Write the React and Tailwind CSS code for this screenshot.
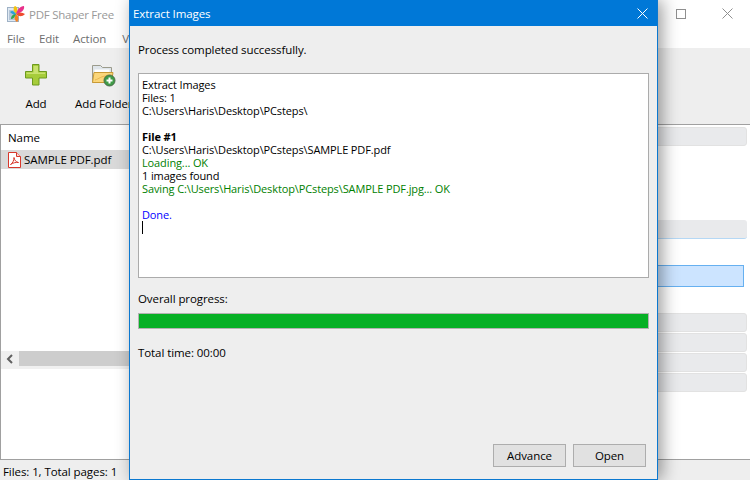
import React from "react";

const font = "font-['Open_Sans','Noto_Sans',sans-serif]";
const uiText = "text-[11.5px] tracking-[-0.08px]";

const PanelRow = ({ className = "" }) => (
  <div className={`h-[19px] w-full rounded-[3px] bg-[#e9eaec] border border-[#e2e2e2] ${className}`} />
);

const Logo = () => (
  <svg width="18" height="18" viewBox="0 0 18 18">
    <rect x="0.500" y="2.500" width="11" height="14" fill="#dfe9f3" stroke="#9fb2c6" />
    <path d="M2 6h8M2 8h8M2 10h7M2 12h7M2 14h7" stroke="#8aa0b8" />
    <path d="M9 9C6 6 6 2 8 1c3 1 3 5 1 8z" fill="#f4c20d" />
    <path d="M9 9c1-4 4-8 8-8 1 4-3 7-8 8z" fill="#e8308a" />
    <path d="M9 9c3-2 6-2 9 0-3 3-6 3-9 0z" fill="#ef4b2f" />
    <path d="M9 9c3 2 3 6 1 8-3-2-3-5-1-8z" fill="#f58220" />
    <path d="M9 9c-1 3-3 5-5 5 0-3 2-5 5-5z" fill="#2fa84f" />
    <path d="M9 9C7 10 5 9 3 7c2-2 4-1 6 2z" fill="#2b9fd9" />
  </svg>
);

const PlusIcon = () => (
  <svg width="24" height="24" viewBox="0 0 24 24">
    <path
      d="M8.500 1.500h6.500v7h7.500v6.500H15v7H8.500v-7H1.500V8.500h7z"
      fill="#a6cc3a"
      stroke="#6d9a1e"
      strokeLinejoin="round"
    />
    <path d="M9.500 3h4.500v6.500H21v1.500H2.500V9.500h7z" fill="#c9e26f" />
  </svg>
);

const FolderIcon = () => (
  <svg width="25" height="24" viewBox="0 0 25 24">
    <path d="M1.500 2.500h8l2 2h9v15h-19z" fill="#dfe5ea" stroke="#9b9b8c" />
    <path d="M3.500 6.500h15v3h-15z" fill="#fff" />
    <path d="M1.500 19.500l1.500-10h19l-1.500 10z" fill="#fbd67a" stroke="#c99a35" />
    <path d="M4 17c4-1 6-4 12-4" fill="none" stroke="#e8b64f" />
    <circle cx="18.500" cy="17.500" r="5.500" fill="#3f9b47" stroke="#4a6b4a" />
    <path d="M18.500 14.500v6M15.500 17.500h6" stroke="#fff" strokeWidth="2" />
  </svg>
);

const PdfIcon = () => (
  <svg width="13" height="16" viewBox="0 0 13 16">
    <path d="M.5.500h8l4 4v11H.5z" fill="#fff" stroke="#d8372b" />
    <path d="M8.500.500v4h4" fill="#f7d5d2" stroke="#d8372b" />
    <path
      d="M2.500 12.500c2-1 3.500-4 3.500-7 .5 3 2 4.500 4.500 5-2.500-.5-6 .5-8 2z"
      fill="none"
      stroke="#d8372b"
    />
  </svg>
);

const ToolButton = ({ icon, label }) => (
  <div className="flex flex-col items-center shrink-0">
    <div className="h-[24px] flex items-center">{icon}</div>
    <span className={`mt-[9px] ${uiText} leading-[16px] text-black whitespace-nowrap`}>{label}</span>
  </div>
);

const MainWindow = () => (
  <div className="w-[750px] h-[480px] flex flex-col bg-white">
    <div className="h-[27px] flex items-center shrink-0 pl-[7px]">
      <Logo />
      <span className="ml-[4px] mt-[2px] text-[11.5px] tracking-[-0.25px] text-[#999999]">PDF Shaper Free</span>
      <div className="ml-auto flex items-center gap-[36px] pr-[17px]">
        <div className="w-[10px] h-[10px] border border-[#8f8f8f]" />
        <svg width="11" height="11" viewBox="0 0 11 11">
          <path d="M.5.500l10 10M10.500.500l-10 10" stroke="#8f8f8f" />
        </svg>
      </div>
    </div>
    <div className={`h-[21px] pt-[3px] flex items-center gap-[14px] pl-[7px] ${uiText} text-[#6e6e6e] shrink-0`}>
      <span>File</span>
      <span>Edit</span>
      <span>Action</span>
      <span className="ml-[2px]">View</span>
    </div>
    <div className="h-[76px] bg-[#eeeeee] flex pt-[15px] pl-[24px] gap-[27px] shrink-0">
      <ToolButton icon={<PlusIcon />} label="Add" />
      <ToolButton icon={<FolderIcon />} label="Add Folder" />
    </div>
    <div className="flex-1 flex border-t border-[#a0a0a0] border-b min-h-0">
      <div className="w-[400px] border-l border-[#a0a0a0] flex flex-col shrink-0">
        <div className={`h-[25px] flex items-center pl-[7px] ${uiText} text-black`}>Name</div>
        <div className={`h-[19px] bg-[#d9d9d9] flex items-center pl-[7px] gap-[3px] ${uiText} text-black`}>
          <PdfIcon />
          <span>SAMPLE PDF.pdf</span>
        </div>
        <div className="mt-[182px] h-[18px] bg-[#f0f0f0] flex items-start">
          <div className="w-[18px] h-[15px] flex items-center justify-center">
            <svg width="8" height="10" viewBox="0 0 8 10">
              <path d="M6 1L2 5l4 4" fill="none" stroke="#606060" strokeWidth="2" />
            </svg>
          </div>
          <div className="h-[15px] w-[382px] bg-[#cdcdcd]" />
        </div>
      </div>
      <div className="flex-1 flex flex-col pt-[2px] pr-[3px]">
        <PanelRow />
        <div className="mt-[74px] h-[19px] rounded-[3px] bg-[#e9eaec] border-b border-[#b5d8f5]" />
        <div className="mt-[26px] h-[22px] bg-[#cce4ff] border border-[#66b0f0] w-[calc(100%-3px)]" />
        <div className="mt-[26px] flex flex-col gap-[1px]">
          <PanelRow />
          <PanelRow />
          <PanelRow />
          <PanelRow />
        </div>
      </div>
    </div>
    <div className={`h-[20px] bg-[#eeeeee] flex items-center pl-[3px] pt-[3px] ${uiText} text-black shrink-0`}>
      Files: 1, Total pages: 1
    </div>
  </div>
);

const LogLine = ({ className = "", children }) => <div className={`h-[13px] ${className}`}>{children}</div>;

const Dialog = () => (
  <div className="absolute left-[129px] top-0 w-[529px] h-[480px] flex flex-col bg-[#eeeeee] border-x border-b border-[#0b78d0] shadow-[4px_0_16px_rgba(0,0,0,0.4)]">
    <div className={`h-[26px] bg-[#0078d7] flex items-center pl-[3px] pr-[9px] ${uiText} text-white shrink-0`}>
      <span className="mt-[2px]">Extract Images</span>
      <svg className="ml-auto" width="11" height="11" viewBox="0 0 11 11">
        <path d="M.5.500l10 10M10.500.500l-10 10" stroke="#fff" />
      </svg>
    </div>
    <div className={`flex-1 flex flex-col px-[8px] ${uiText} text-black`}>
      <div className="mt-[15px] h-[17px] leading-[17px]">Process completed successfully.</div>
      <div className="mt-[15px] h-[205px] bg-white border border-[#ababab] pl-[3px] pt-[4px] leading-[13px] text-[11px] tracking-[-0.12px]">
        <LogLine>Extract Images</LogLine>
        <LogLine>Files: 1</LogLine>
        <LogLine>C:\Users\Haris\Desktop\PCsteps\</LogLine>
        <LogLine />
        <LogLine className="font-bold">File #1</LogLine>
        <LogLine>C:\Users\Haris\Desktop\PCsteps\SAMPLE PDF.pdf</LogLine>
        <LogLine className="text-[#008000]">Loading... OK</LogLine>
        <LogLine>1 images found</LogLine>
        <LogLine className="text-[#008000]">Saving C:\Users\Haris\Desktop\PCsteps\SAMPLE PDF.jpg... OK</LogLine>
        <LogLine />
        <LogLine className="text-[#0000ff]">Done.</LogLine>
        <div className="w-px h-[13px] bg-black" />
      </div>
      <div className="mt-[12px] h-[17px] leading-[17px]">Overall progress:</div>
      <div className="mt-[6px] h-[16px] bg-[#06b025] border border-[#b2b2b2]" />
      <div className="mt-[15px] h-[17px] leading-[17px]">Total time: 00:00</div>
      <div className="mt-auto mb-[12px] flex justify-end gap-[7px] pr-[3px]">
        <button className={`w-[73px] h-[23px] bg-[#e1e1e1] border border-[#adadad] ${uiText} text-black`}>Advance</button>
        <button className={`w-[73px] h-[23px] bg-[#e1e1e1] border border-[#adadad] ${uiText} text-black`}>Open</button>
      </div>
    </div>
  </div>
);

export default function App() {
  return (
    <div className={`relative w-[750px] h-[480px] overflow-hidden ${font}`}>
      <MainWindow />
      <Dialog />
    </div>
  );
}
